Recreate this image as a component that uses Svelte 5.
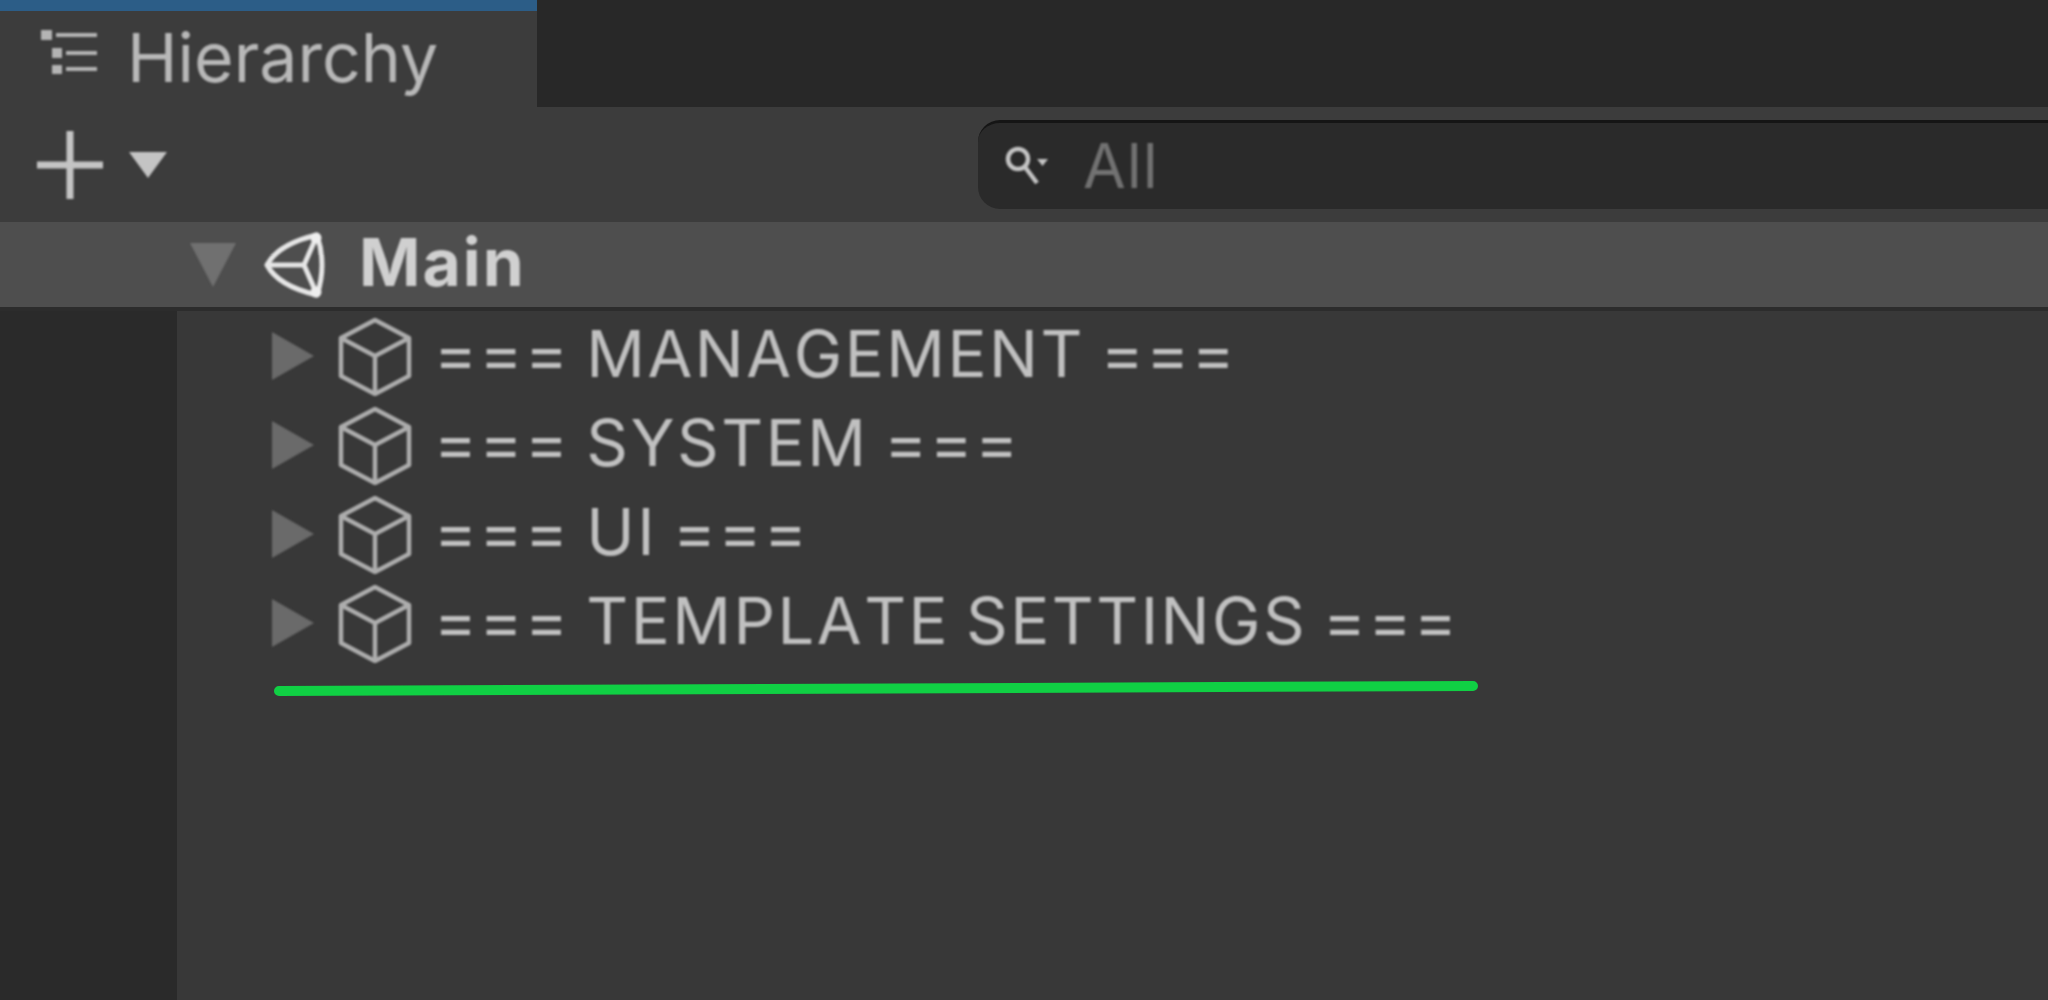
<script>
  const objects = ['=== MANAGEMENT ===', '=== SYSTEM ===', '=== UI ===', '=== TEMPLATE SETTINGS ==='];
</script>

<div class="window">
  <div class="tabs">
    <div class="tab">
      <svg class="tab-icon" width="56" height="48" viewBox="0 0 56 48">
        <g fill="#b4b4b4">
          <rect x="0" y="0" width="11" height="10" />
          <rect x="11" y="18" width="10" height="10" />
          <rect x="11" y="35" width="10" height="9" />
          <rect x="15" y="3" width="41" height="4" />
          <rect x="25" y="21" width="31" height="4" />
          <rect x="25" y="37" width="31" height="4" />
        </g>
      </svg>
      <span>Hierarchy</span>
    </div>
  </div>

  <div class="toolbar">
    <button class="add">
      <svg width="66" height="68" viewBox="0 0 66 68">
        <path d="M0 34H66M33 0V68" stroke="#c4c4c4" stroke-width="7" fill="none" />
      </svg>
      <svg width="38" height="26" viewBox="0 0 38 26">
        <path d="M0 0H38L19 26Z" fill="#c4c4c4" />
      </svg>
    </button>
    <div class="search">
      <svg width="44" height="42" viewBox="0 0 44 42">
        <circle cx="14" cy="14" r="10" fill="none" stroke="#c4c4c4" stroke-width="4.5" />
        <path d="M21 22L33 38" stroke="#c4c4c4" stroke-width="4.5" fill="none" />
        <path d="M33 14H44L38.500 21Z" fill="#c4c4c4" />
      </svg>
      <span>All</span>
    </div>
  </div>

  <div class="scene">
    <svg class="arrow-down" width="46" height="44" viewBox="0 0 46 44">
      <path d="M0 0H46L23 44Z" fill="#707070" />
    </svg>
    <svg class="unity" width="64" height="66" viewBox="0 0 64 66">
      <g fill="none" stroke="#e6e6e6" stroke-width="5" stroke-linejoin="round">
        <path d="M3 33Q14 12 53 3Q63 33 53 63Q14 54 3 33Z" />
        <path d="M3 33H40L51 8M40 33L51 58" />
      </g>
      <circle cx="52" cy="6" r="5.500" fill="#eeeeee" />
      <circle cx="52" cy="60" r="5.500" fill="#eeeeee" />
    </svg>
    <span>Main</span>
  </div>

  <div class="body">
    <div class="gutter"></div>
    <ul class="tree">
      {#each objects as name}
        <li>
          <svg class="arrow-right" width="42" height="48" viewBox="0 0 42 48">
            <path d="M0 0L42 24L0 48Z" fill="#6a6a6a" />
          </svg>
          <svg class="cube" width="74" height="78" viewBox="0 0 74 78">
            <g fill="none" stroke="#adadad" stroke-width="4.500" stroke-linejoin="round">
              <path d="M37 2L71 20V58L37 76L3 58V20Z" />
              <path d="M3 20L37 38L71 20M37 38V76" />
            </g>
          </svg>
          <span>{name}</span>
        </li>
      {/each}
    </ul>
  </div>

  <svg class="note" width="1210" height="20" viewBox="0 0 1210 20">
    <path d="M8 14L1202 9" stroke="#10d044" stroke-width="10" stroke-linecap="round" />
  </svg>
</div>

<style>
  :global(body) {
    margin: 0;
    background: #383838;
  }

  .window {
    position: relative;
    width: 2048px;
    height: 1000px;
    overflow: hidden;
    display: flex;
    flex-direction: column;
    font-family: Inter, "Liberation Sans", sans-serif;
  }

  /* the reference is an upscaled capture, so glyphs and icons are soft */
  .tab span,
  .tab svg,
  .toolbar svg,
  .search span,
  .scene span,
  .scene svg,
  .tree span,
  .tree svg {
    filter: blur(0.8px);
  }

  .tabs {
    height: 107px;
    flex: none;
    background: #282828;
  }

  .tab {
    width: 537px;
    height: 107px;
    box-sizing: border-box;
    border-top: 11px solid #2c5d87;
    background: #3c3c3c;
    display: flex;
    align-items: center;
    padding-left: 41px;
    gap: 30px;
    color: #b8b8b8;
    font-size: 68px;
    line-height: 1;
  }

  .tab span {
    padding-bottom: 4px;
  }

  .tab-icon {
    flex: none;
    margin-bottom: 10px;
  }

  .toolbar {
    height: 115px;
    flex: none;
    background: #3c3c3c;
    display: flex;
    align-items: center;
  }

  .add {
    width: 978px;
    flex: none;
    display: flex;
    align-items: center;
    gap: 26px;
    padding: 0 0 0 37px;
    box-sizing: border-box;
    background: none;
    border: 0;
  }

  .search {
    flex: 1;
    height: 89px;
    box-sizing: border-box;
    background: #2a2a2a;
    border-top: 3px solid #151515;
    border-radius: 22px 0 0 22px;
    display: flex;
    align-items: center;
    padding-left: 26px;
    gap: 35px;
    color: #727272;
    font-size: 62px;
    letter-spacing: 1px;
    line-height: 1;
  }

  .scene {
    height: 85px;
    flex: none;
    background: #4e4e4e;
    border-bottom: 4px solid #2c2c2c;
    display: flex;
    align-items: center;
    padding-left: 190px;
    color: #d0d0d0;
    font-size: 66px;
    font-weight: 700;
    letter-spacing: 2px;
    line-height: 1;
  }

  .scene span {
    padding-bottom: 6px;
  }

  .arrow-down {
    margin-right: 28px;
  }

  .unity {
    margin-right: 31px;
  }

  .body {
    flex: 1;
    display: flex;
    background: #383838;
  }

  .gutter {
    width: 177px;
    flex: none;
    background: #2a2a2a;
  }

  .tree {
    margin: 0;
    padding: 0 0 0 95px;
    list-style: none;
  }

  .tree li {
    height: 89px;
    display: flex;
    align-items: center;
    color: #c0c0c0;
    font-size: 65px;
    font-kerning: none;
    letter-spacing: 2.5px;
    word-spacing: -5px;
    line-height: 1;
    white-space: pre;
  }

  .tree li span {
    padding-bottom: 5px;
  }

  .arrow-right {
    margin-right: 24px;
  }

  .cube {
    margin-right: 22px;
    margin-top: 3px;
  }

  .note {
    position: absolute;
    left: 271px;
    top: 677px;
  }
</style>
